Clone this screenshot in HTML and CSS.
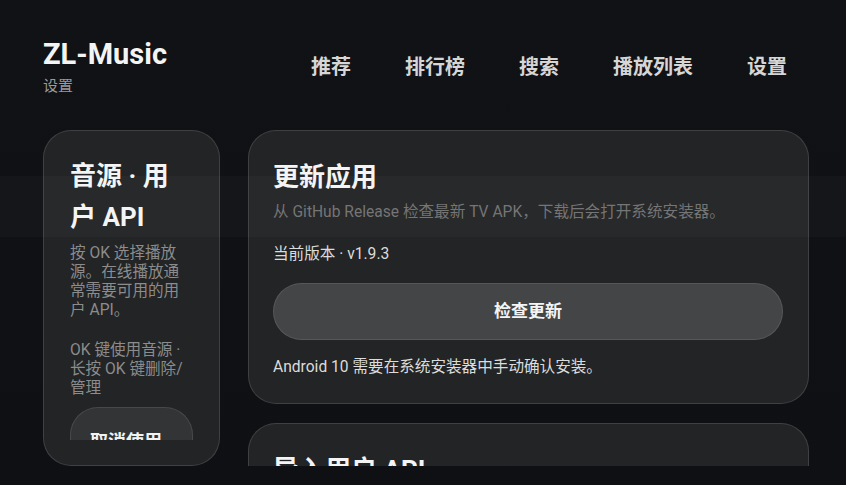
FILE: index.html
```html
<!DOCTYPE html>
<html lang="zh">
<head>
    <meta charset="utf-8">
    <title>ZL-Music 设置</title>
    <link rel="stylesheet" href="styles.css">
</head>
<body>
<div class="app">
    <header class="top">
        <div class="brand">
            <div class="brand_name">ZL-Music</div>
            <div class="brand_sub">设置</div>
        </div>
        <nav class="tabs">
            <span class="tab">推荐</span>
            <span class="tab">排行榜</span>
            <span class="tab">搜索</span>
            <span class="tab">播放列表</span>
            <span class="tab">设置</span>
        </nav>
    </header>

    <main class="content">
        <aside class="side_card">
            <div class="side_inner">
                <h2 class="side_title">音源 · 用户 API</h2>
                <p class="side_text">按 OK 选择播放源。在线播放通常需要可用的用户 API。</p>
                <p class="side_text side_hint">OK 键使用音源 · 长按 OK 键删除/管理</p>
                <div class="side_button">取消使用</div>
            </div>
        </aside>

        <section class="card_list">
            <div class="card">
                <h2 class="card_title">更新应用</h2>
                <p class="card_desc">从 GitHub Release 检查最新 TV APK，下载后会打开系统安装器。</p>
                <p class="card_line">当前版本 · v1.9.3</p>
                <div class="wide_button">检查更新</div>
                <p class="card_line">Android 10 需要在系统安装器中手动确认安装。</p>
            </div>
            <div class="card">
                <h2 class="card_title">导入用户 API</h2>
                <p class="card_desc">从本地文件或链接导入用户 API 脚本。</p>
            </div>
        </section>
    </main>

    <div class="band"></div>
</div>
</body>
</html>
```

FILE: styles.css
```css
*{
    box-sizing: border-box;
}

body{
    margin: 0;
    background-color: #0e1013;
    color: #f2f2f2;
    font-family: Roboto, "Noto Sans CJK SC", sans-serif;
}

.app{
    position: relative;
    width: 846px;
    height: 485px;
    overflow: hidden;
    background: linear-gradient(180deg, #101215 0%, #0e1013 100%);
}

.top{
    display: flex;
    flex-direction: row;
    align-items: flex-start;
    justify-content: space-between;
    padding: 37px 59px 0 43px;
    height: 130px;
}

.brand_name{
    font-size: 29px;
    font-weight: 700;
    line-height: 34px;
    color: #f4f4f4;
}

.brand_sub{
    margin-top: 5px;
    font-size: 15px;
    line-height: 20px;
    color: #9a9a9a;
}

.tabs{
    display: flex;
    flex-direction: row;
    gap: 54px;
    margin-top: 15px;
}

.tab{
    font-size: 20px;
    font-weight: 700;
    line-height: 30px;
    color: #d6d6d6;
}

.content{
    display: grid;
    grid-template-columns: 177px 561px;
    gap: 28px;
    padding-left: 43px;
    height: 336px;
}

.side_card{
    height: 336px;
    padding: 25px 26px 25px 26px;
    border: 1px solid rgba(255, 255, 255, 0.13);
    border-radius: 28px;
    background-color: #222426;
}

.side_inner{
    height: 100%;
    overflow: hidden;
}

.side_title{
    margin: 0;
    font-size: 26px;
    font-weight: 700;
    line-height: 41px;
    color: #f4f4f4;
}

.side_text{
    margin: 0;
    margin-top: 6px;
    font-size: 15.6px;
    line-height: 19px;
    color: #8c8c8c;
}

.side_hint{
    margin-top: 21px;
}

.side_button{
    margin-top: 9px;
    height: 60px;
    padding: 22px 0 0 19px;
    border: 1px solid rgba(255, 255, 255, 0.1);
    border-radius: 28px;
    background-color: #323436;
    font-size: 18px;
    font-weight: 700;
    line-height: 24px;
    color: #f2f2f2;
}

.card_list{
    display: flex;
    flex-direction: column;
    gap: 19px;
    height: 336px;
    overflow: hidden;
}

.card{
    flex-shrink: 0;
    padding: 24px 25px 26px 24px;
    border: 1px solid rgba(255, 255, 255, 0.13);
    border-radius: 28px;
    background-color: #222426;
}

.card_title{
    margin: 0;
    font-size: 26px;
    font-weight: 700;
    line-height: 44px;
    color: #f4f4f4;
}

.card_desc{
    margin: 0;
    margin-top: 3px;
    font-size: 15.6px;
    line-height: 20px;
    color: #727272;
}

.card_line{
    margin: 0;
    margin-top: 22px;
    font-size: 15.6px;
    line-height: 20px;
    color: #dcdcdc;
}

.wide_button{
    margin-top: 19px;
    height: 57px;
    border: 1px solid rgba(255, 255, 255, 0.1);
    border-radius: 29px;
    background-color: #444546;
    font-size: 17px;
    font-weight: 700;
    line-height: 55px;
    text-align: center;
    color: #f4f4f4;
}

.wide_button + .card_line{
    margin-top: 17px;
}

.band{
    position: absolute;
    left: 0;
    top: 176px;
    width: 100%;
    height: 61px;
    background-color: rgba(255, 255, 255, 0.025);
    pointer-events: none;
}
```
